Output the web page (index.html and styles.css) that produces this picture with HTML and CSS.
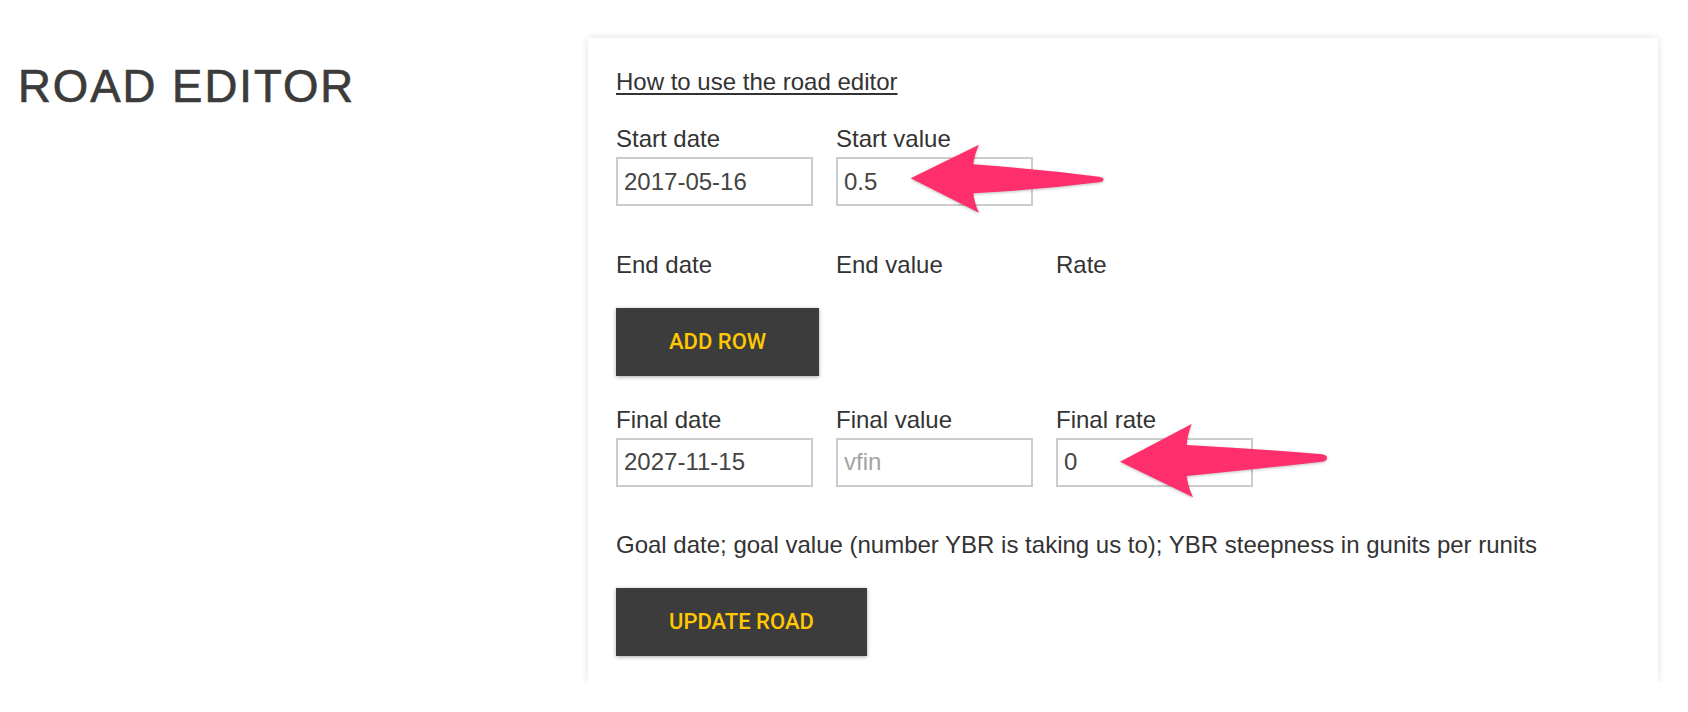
FILE: index.html
```html
<!DOCTYPE html>
<html lang="en">
<head>
<meta charset="utf-8">
<title>Road Editor</title>
<link rel="stylesheet" href="styles.css">
</head>
<body>
<div class="page">
  <h1 class="title">ROAD EDITOR</h1>
  <div class="card">
    <a class="help" href="#">How to use the road editor</a>

    <div class="grid fields first">
      <label class="field"><span class="lbl">Start date</span><input class="inp" type="text" value="2017-05-16"></label>
      <label class="field"><span class="lbl">Start value</span><input class="inp" type="text" value="0.5"></label>
    </div>

    <div class="grid heads">
      <span class="lbl">End date</span>
      <span class="lbl">End value</span>
      <span class="lbl">Rate</span>
    </div>

    <button class="btn add" type="button">ADD ROW</button>

    <div class="grid fields final">
      <label class="field"><span class="lbl">Final date</span><input class="inp" type="text" value="2027-11-15"></label>
      <label class="field"><span class="lbl">Final value</span><input class="inp" type="text" placeholder="vfin"></label>
      <label class="field"><span class="lbl">Final rate</span><input class="inp" type="text" value="0"></label>
    </div>

    <p class="goal">Goal date; goal value (number YBR is taking us to); YBR steepness in gunits per runits</p>

    <button class="btn update" type="button">UPDATE ROAD</button>

    <svg class="arrow a1" viewBox="0 0 220 95" aria-hidden="true">
      <path d="M12.7,45.3 L81,11.7 Q76.5,21 75.3,31.3 Q140,36 201,43.7 Q205.5,44.3 205.5,46.5 Q205.5,48.7 201,49.3 Q140,57 75.3,60.3 Q76.5,71 81,79.7 Z"/>
    </svg>
    <svg class="arrow a2" viewBox="0 0 230 95" aria-hidden="true">
      <path d="M12,48.7 L83.7,11 Q79.5,21 78.7,32 Q150,36 214,41.3 Q219,42 219,45 Q219,48 214,48.7 Q150,56 78.7,63 Q80,74 85,84.3 Z"/>
    </svg>
  </div>
</div>
</body>
</html>
```

FILE: styles.css
```css
* { box-sizing: border-box; }

body {
  margin: 0;
  background: #ffffff;
  font-family: "Liberation Sans", Arial, sans-serif;
  color: #333333;
}

.page {
  display: flex;
  align-items: flex-start;
  padding: 38px 0 0 18px;
}

.title {
  flex: none;
  width: 570px;
  margin: 0;
  padding-top: 23px;
  font-family: "Liberation Sans", Arial, sans-serif;
  font-weight: 400;
  font-size: 45.5px;
  line-height: 52px;
  letter-spacing: 2px;
  color: #3b3b3b;
  -webkit-text-stroke: 0.7px #3b3b3b;
}

.card {
  position: relative;
  flex: none;
  width: 1070px;
  display: flex;
  flex-direction: column;
  align-items: flex-start;
  padding: 26px 28px 26px 28px;
  background: #ffffff;
  box-shadow: 0 0 8px rgba(0, 0, 0, 0.13);
  font-size: 24px;
  line-height: 36px;
}

.help {
  display: block;
  color: #333333;
  text-decoration: underline;
  text-decoration-thickness: 2px;
  text-underline-offset: 3px;
  margin-bottom: 21px;
}

.grid {
  display: grid;
  grid-template-columns: repeat(3, 197px);
  column-gap: 23px;
}

.field {
  display: flex;
  flex-direction: column;
}

.lbl {
  display: block;
  line-height: 36px;
  color: #333333;
}

.inp {
  width: 197px;
  height: 49px;
  margin: 0;
  padding: 0 6px;
  border: 2px solid #cccccc;
  border-radius: 0;
  background: #ffffff;
  font-family: "Liberation Sans", Arial, sans-serif;
  font-size: 24px;
  color: #444444;
  outline: none;
}

.inp::placeholder {
  color: #a3a3a3;
  opacity: 1;
}

.heads {
  margin-top: 41px;
}

.btn {
  margin: 0;
  border: none;
  border-radius: 0;
  background: #3c3c3c;
  color: #ffc800;
  font-family: Roboto, "Liberation Sans", sans-serif;
  font-size: 22px;
  font-weight: 500;
  height: 67.5px;
  padding: 0 53px;
  box-shadow: 0 1px 4px rgba(0, 0, 0, 0.35);
  cursor: pointer;
}

.add {
  margin-top: 25px;
}

.final {
  margin-top: 26px;
}

.goal {
  margin: 40px 0 0 0;
  line-height: 36px;
  color: #333333;
}

.update {
  margin-top: 25.5px;
}

.arrow {
  position: absolute;
  fill: #ff2e6c;
  filter: drop-shadow(0 1px 1.5px rgba(0, 0, 0, 0.25));
}

.a1 {
  left: 310px;
  top: 95px;
  width: 220px;
  height: 95px;
}

.a2 {
  left: 520px;
  top: 375px;
  width: 230px;
  height: 95px;
}
```
